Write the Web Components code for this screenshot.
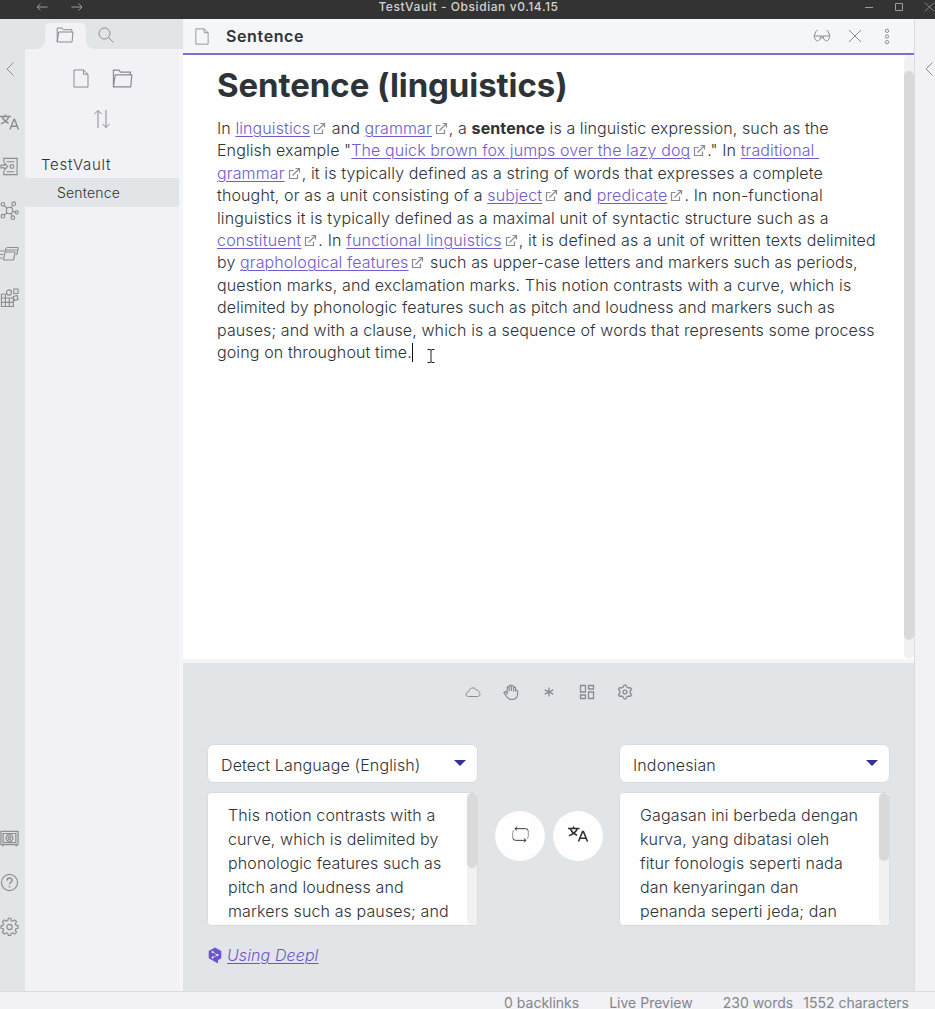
<!DOCTYPE html>
<html lang="en">
<head>
<meta charset="utf-8">
<title>TestVault - Obsidian v0.14.15</title>
<style>
html,body{margin:0;height:100%;overflow:hidden;background:#e1e5e8}
body{font-family:Inter,"Noto Sans",sans-serif;color:#2e3338;font-size:16px;font-weight:300}
</style>
</head>
<body>
<vault-app></vault-app>
<script>
const I={
arrowL:['0 0 12 10','<path d="M11.5 5H1M4.5 1.5 1 5l3.5 3.5"/>'],
arrowR:['0 0 12 10','<path d="M.5 5H11M7.5 1.5 11 5 7.5 8.5"/>'],
min:['0 0 10 10','<path d="M1 5.5h8"/>'],
max:['0 0 10 10','<path d="M1.5 1.5h7v7h-7z"/>'],
close:['0 0 14 14','<path d="M1 1l12 12M13 1 1 13"/>'],
chev:['0 0 8 14','<path d="M7.500 .5 1 7l6.500 6.500"/>'],
folder:['0 0 18 16','<path d="M1.200 15V1h4.800l1.200 1.700h8.600v2M1.200 15 2.800 5H17l-1 10z"/>'],
file:['0 0 16 20','<path d="M1 1h9.500L15 5.500V19H1zM10.500 1v4.500H15"/>'],
search:['0 0 16 16','<circle cx="6.500" cy="6.500" r="5.500"/><path d="M10.500 10.500l5 5"/>'],
sort:['0 0 18 20','<path d="M5 19V1.500M1.500 5 5 1.500 8.500 5M13 1v17.500M9.500 15l3.500 3.500 3.500-3.500"/>'],
trans:['0 0 20 18','<path d="M0 2.700h11.500M5.500.5v2.200M1 10.500C5 8.500 8.500 6 9.300 2.700M2.500 3.500C4 7 6 8.500 9 9.800M10.500 16.500 14.600 5.800h.8l4.100 10.700M12 13h6" />'],
doc:['0 0 20 20','<path d="M4 5.500V1.500h14v17H4V14.500M7 5h8M7 15.500h8M1 8.500h4V6.500L8 10l-3 3.500v-2H1z"/><circle cx="12.500" cy="10" r="2"/>'],
graph:['0 0 20 20','<circle cx="10" cy="10" r="3.400"/><circle cx="3" cy="3.500" r="1.900"/><circle cx="14.500" cy="2.800" r="1.900"/><circle cx="3" cy="16" r="1.900"/><circle cx="17.500" cy="12" r="1.600"/><circle cx="13.500" cy="17.500" r="1.900"/><path d="M4.500 5l3 2.500M13.500 4.600l-2 2.500M4.500 14.700 7.500 12.500M13.300 11l2.600.6M12.800 15.800 11.500 13"/>'],
cards:['0 0 20 16','<path d="M7.500 1.500h10.800q1 0 .8 1L17.500 9M6.500 4h11M5.500 6h9.500q1 0 .8 1l-1.300 6q-.2 1-1.200 1H4.500q-1 0-.8-1L5.800 3.500q.3-2 2-2M0 5h4M0 8.500h3.200M0 12h2.500"/>'],
plug:['0 0 20 20','<path d="M1.500 6v12.500H14V10M1.500 10H14M5.700 6v12.500M9.800 10v8.500M1.500 14.300H14M1.500 6h4.200M14.500 1h4.500v4.500h-4.500zM14 8.500l4-1 1 4-4 1z"/><circle cx="9.500" cy="4.500" r="2.600"/>'],
vault:['0 0 20 18','<path d="M1 1.500h18v14H1zM3.300 3.700h13.400v9.600H3.300zM3 16v1.500M17 16v1.500"/><circle cx="10" cy="8.500" r="3.600"/><circle cx="10" cy="8.500" r="1.500"/>'],
help:['0 0 20 20','<circle cx="10" cy="10" r="8.500"/><path d="M7.500 8c0-3.800 5.300-3.500 5.200-.3C12.600 9.800 10 9.800 10 12M10 13.800v1.400" stroke-width="1.500"/>'],
gear:['0 0 20 20','<path d="M8.300 3.600 8.600 1.300h2.800l.3 2.300 1.900.8 1.900-1.400 2 2-1.400 1.900.8 1.900 2.100.3v2.800l-2.100.3-.8 1.900 1.400 1.900-2 2-1.900-1.400-1.900.8-.3 1.900H8.600l-.3-1.900-1.900-.8L4.500 18l-2-2 1.400-1.900-.8-1.900L1.100 11.900V9.100l2-.3.8-1.900L2.500 5l2-2 1.900 1.400z" stroke-linejoin="round"/><circle cx="10" cy="10.500" r="2.800"/>'],
cog:['0 0 16 16','<path d="M6.300 3 7 1.100h2L9.700 3l1.700 1 2-.4 1.100 1.800L13.200 7v2l1.300 1.600-1.100 1.800-2-.4-1.700 1L9 14.900H7L6.300 13l-1.700-1-2 .4-1.100-1.800L2.800 9V7L1.500 5.400l1.100-1.800 2 .4z" stroke-linejoin="round"/><circle cx="8" cy="8" r="1.900"/>'],
glasses:['0 0 18 14','<path d="M.8 7h16.400M1 7 3 2.300q.4-1 1.500-.8M17 7l-2-4.700q-.4-1-1.500-.8M1.500 7.500c0 6 6 5.500 6.200 0M10.300 7.500c.2 5.500 6.200 6 6.200 0M7.700 9q1.300-1 2.600 0"/>'],
dots:['0 0 6 18','<circle cx="3" cy="3" r="1.700"/><circle cx="3" cy="9" r="1.700"/><circle cx="3" cy="15" r="1.700"/>'],
cloud:['0 0 16 12','<path d="M3.500 10.500C.2 10.500.2 6 3.600 5.800 4 2 9.300.2 11.200 4c2.300-.2 2.800 1.500 2.600 2.300 1.800 1 1.500 4.200-1.300 4.200z"/>'],
hand:['0 0 16 16','<path d="M4.200 10.200V3.500c0-1.300 2-1.300 2 0V7M6.200 7V2c0-1.300 2.200-1.300 2.200 0v5M8.400 7V2.500c0-1.300 2.200-1.300 2.200 0v5M10.600 7.500V4c0-1.300 2-1.300 2 0v3.500c0-1.800 2-1.600 2 0V10c0 6.500-8.200 7-11 2.500L1.200 9.200c-.7-1.300 1-2.200 1.800-1.100l1.200 1.700"/>'],
star:['0 0 12 12','<path d="M6 1.500v9M1.700 3.800l8.600 4.400M10.300 3.800 1.700 8.200"/>'],
dash:['0 0 16 16','<path d="M1.500 1.500h5v6.500h-5zM9.500 1.500h5v3.500h-5zM9.500 8h5v6.500h-5zM1.500 11h5v3.500h-5z"/>'],
ext:['0 0 13 13','<path d="M5.500 3.500h-4v8h8v-4M4.500 8.500l7-7M7.500 1.500h4v4"/>'],
swap:['0 0 20 18','<path d="M4 2.800h11q3 0 3 2.200M6.500.8 4.200 2.800l2.300 2M16 15.200H5q-3 0-3-2.200M13.500 13.200l2.300 2-2.300 2"/><path d="M1.800 13V7q0-2 1.700-2.500M18.200 5v6q0 2-1.500 2.500" opacity=".55"/>'],
deepl:['0 0 14 17','<path d="M7 .5 13.300 4v7.300L10 13.200V16.500L6.500 14.600.7 11.300V4z" fill="#6c56cc" stroke="none"/><path d="M4.500 5 9.500 8 4.500 10.500" stroke="#e1e5e8" stroke-width=".7"/><g fill="#fff" stroke="none"><circle cx="4.600" cy="5" r="1"/><circle cx="9.500" cy="8" r="1"/><circle cx="4.600" cy="10.500" r="1"/></g>'],
caret:['0 0 12 6','<path d="M.5 0h11v.5L6 6 .5.500z" fill="#33309a" stroke="none"/>'],
ibeam:['0 0 8 16','<path d="M.5 1.500H3L4 2.200 5 1.500h2.500M4 2.200v11.600M.5 14.500H3l1-.7 1 .7h2.500" stroke="#222"/>']
};
const define=(name,css,html)=>customElements.define(name,class extends HTMLElement{
 constructor(){super();this.attachShadow({mode:'open'}).innerHTML='<style>*{box-sizing:border-box}'+css+'</style>'+html;}
});
customElements.define('ob-icon',class extends HTMLElement{
 constructor(){super();this.attachShadow({mode:'open'});}
 connectedCallback(){
  const [vb,body]=I[this.getAttribute('name')];const d=vb.split(' ');
  const w=this.getAttribute('w')||d[2],h=this.getAttribute('h')||d[3];
  this.shadowRoot.innerHTML=`<style>:host{display:inline-flex;flex:none;width:${w}px;height:${h}px;color:#888b8f}svg{display:block}</style><svg width="${w}" height="${h}" viewBox="${vb}" preserveAspectRatio="none" fill="none" stroke="currentColor" stroke-width="${this.getAttribute('sw')||1}">${body}</svg>`;
 }
});
define('title-bar',`:host{display:grid;grid-template-columns:1fr auto 1fr;height:19px;background:#333;color:#d2d2d2;font-size:12px;font-weight:500;line-height:14px}
nav{display:flex;gap:23px;padding:2px 0 0 36px}.w{display:flex;justify-content:flex-end;gap:20px;padding-top:2px}
ob-icon{color:#a39b9b}span{letter-spacing:.57px;margin-left:2px}`,
`<nav><ob-icon name="arrowL"></ob-icon><ob-icon name="arrowR"></ob-icon></nav><span><slot></slot></span><div class="w"><ob-icon name="min"></ob-icon><ob-icon name="max"></ob-icon><ob-icon name="close" w="11" h="10"></ob-icon></div>`);
define('side-ribbon',`:host{display:flex;flex-direction:column;box-sizing:border-box;background:#e1e5e8;width:25px;height:972px;padding:43px 0 43px}
.r{display:flex;height:44px;align-items:center;justify-content:center;width:19px}.c{height:14px;margin-bottom:24px}.s{flex:1}ob-icon{color:#8b8d8f}`,
`<div class="r c"><ob-icon name="chev"></ob-icon></div><div class="r"><ob-icon name="trans" w="19" h="17" sw="1.5"></ob-icon></div><div class="r"><ob-icon name="doc" w="19" h="19" sw="1.200"></ob-icon></div><div class="r"><ob-icon name="graph" w="19" h="19" sw="1.200"></ob-icon></div><div class="r"><ob-icon name="cards" w="19" h="16" sw="1.200"></ob-icon></div><div class="r"><ob-icon name="plug" w="19" sw="1.200"></ob-icon></div><div class="s"></div><div class="r"><ob-icon name="vault" w="19" h="17" sw="1.300"></ob-icon></div><div class="r"><ob-icon name="help" w="19" h="19" sw="1.200"></ob-icon></div><div class="r"><ob-icon name="gear" w="19" h="19" sw="1.200"></ob-icon></div>`);
define('file-explorer',`:host{display:block;background:linear-gradient(90deg,#f1f1f6 154px,#f4f5f7 154px)}
.tabs{height:30px;background:#e1e5e8;display:flex;padding:4px 0 0 20px}
.tab{height:26px;width:41px;display:flex;align-items:center;justify-content:center;position:relative;padding:0 1px 2px 0}
.on{background:#f1f1f6;border-radius:5px 5px 0 0}.on:before,.on:after{content:"";position:absolute;bottom:0;width:8px;height:8px}
.on:before{right:100%;background:radial-gradient(circle at 0 0,#e1e5e8 7.5px,#f1f1f6 8px)}.on:after{left:100%;background:radial-gradient(circle at 100% 0,#e1e5e8 7.5px,#f1f1f6 8px)}
.acts{display:flex;justify-content:center;gap:23px;width:154px;padding:20px 0 0 1px}.sort{display:flex;justify-content:center;width:154px;padding-top:21px}
.root{font-size:15px;line-height:20px;margin:26px 0 0 16px;letter-spacing:.7px}.item{background:#e1e5e8;border-radius:3px;margin-top:3px;height:29px;width:154px;padding-left:32px;font-size:14px;line-height:29px;letter-spacing:.2px}`,
`<div class="tabs"><div class="tab on"><ob-icon name="folder" w="18" h="16"></ob-icon></div><div class="tab"><ob-icon name="search"></ob-icon></div></div><div class="acts"><ob-icon name="file" w="16" h="19"></ob-icon><ob-icon name="folder" w="21" h="19"></ob-icon></div><div class="sort"><ob-icon name="sort" h="20"></ob-icon></div><div class="root"><slot name="root"></slot></div><div class="item"><slot></slot></div>`);
define('pane-header',`:host{display:flex;box-sizing:border-box;align-items:center;height:36px;background:#f5f6f8;border-bottom:2px solid #7b6cd9;padding:0 24px 0 12px}
b{font-size:16px;font-weight:600;margin-left:17px;letter-spacing:.62px;flex:1}.a{display:flex;align-items:center;gap:17px}.x{margin-right:5px}`,
`<ob-icon name="file" w="14" h="17"></ob-icon><b><slot></slot></b><div class="a"><ob-icon name="glasses" w="18"></ob-icon><ob-icon name="close" w="14" h="14" class="x"></ob-icon><ob-icon name="dots" w="6" h="17"></ob-icon></div>`);
define('scroll-bar',`:host{display:flow-root;width:10px;background:#f1f1f1;border-radius:5px}i{display:block;background:#d9d9d9;border-radius:5px;margin-top:var(--top,0);height:var(--len)}`,`<i></i>`);
define('ext-link',`:host{display:inline}a{color:#705dcf;text-decoration:underline;text-underline-offset:2px;text-decoration-thickness:1px;white-space:pre}ob-icon{margin:0 1px 0 3px;vertical-align:-1px}:host([bare]) ob-icon{display:none}`,`<a><slot></slot></a><ob-icon name="ext" sw="1.200"></ob-icon>`);
define('text-line',`:host{display:block;white-space:pre;letter-spacing:var(--ls,.12px)}`,`<slot></slot>`);
define('note-editor',`:host{display:flex;height:604px;background:#fefefe;position:relative}
article{flex:1;padding:0 0 0 34px}h1{font-size:33px;line-height:44px;font-weight:700;margin:8px 0 10px;letter-spacing:-.08px}.p{line-height:22.4px}
b{font-weight:700}.caret{display:inline-block;width:1px;height:19px;background:#111;vertical-align:-4px}.mouse{position:absolute;left:244px;top:293px}scroll-bar{--top:16px;--len:569px}`,
`<article><h1>Sentence (linguistics)</h1><div class="p">
<text-line style="--ls:.1px">In <ext-link>linguistics</ext-link> and <ext-link>grammar</ext-link>, a <b>sentence</b> is a linguistic expression, such as the</text-line>
<text-line style="--ls:.1px">English example "<ext-link>The quick brown fox jumps over the lazy dog</ext-link>." In <ext-link bare>traditional </ext-link></text-line>
<text-line style="--ls:.14px"><ext-link>grammar</ext-link>, it is typically defined as a string of words that expresses a complete</text-line>
<text-line style="--ls:.13px">thought, or as a unit consisting of a <ext-link>subject</ext-link> and <ext-link>predicate</ext-link>. In non-functional</text-line>
<text-line style="--ls:.14px">linguistics it is typically defined as a maximal unit of syntactic structure such as a</text-line>
<text-line style="--ls:.18px"><ext-link>constituent</ext-link>. In <ext-link>functional linguistics</ext-link>, it is defined as a unit of written texts delimited</text-line>
<text-line style="--ls:.11px">by <ext-link>graphological features</ext-link> such as upper-case letters and markers such as periods,</text-line>
<text-line style="--ls:.13px">question marks, and exclamation marks. This notion contrasts with a curve, which is</text-line>
<text-line style="--ls:.11px">delimited by phonologic features such as pitch and loudness and markers such as</text-line>
<text-line style="--ls:.11px">pauses; and with a clause, which is a sequence of words that represents some process</text-line>
<text-line>going on throughout time.<span class="caret"></span></text-line></div></article><ob-icon class="mouse" name="ibeam"></ob-icon><scroll-bar></scroll-bar>`);
define('lang-select',`:host{display:flex;box-sizing:border-box;align-items:center;justify-content:space-between;height:39px;background:#fefefe;border:1px solid #dadde0;border-radius:7px;padding:3px 11px 0 13px;line-height:24px;letter-spacing:.13px}ob-icon{margin-top:-4px}`,`<span><slot></slot></span><ob-icon name="caret" w="12" h="6"></ob-icon>`);
define('text-box',`:host{display:flex;box-sizing:border-box;height:134px;background:#fefefe;border:1px solid #dadde0;border-radius:4px;overflow:hidden;line-height:24px}div{flex:1;padding:10px 0 0 20px}`,`<div><slot></slot></div><scroll-bar></scroll-bar>`);
define('translate-panel',`:host{display:block;box-sizing:border-box;height:332px;background:#e1e5e8;border-top:4px solid #f5f6f8}
.tools{display:flex;justify-content:center;gap:22px;height:58px;align-items:center}.tools>span{width:16px;display:flex;justify-content:center}
.g{display:grid;grid-template-columns:271px 108px 271px;column-gap:16.5px;padding:23px 0 0 24px}.col{display:grid;gap:9px}.btns{display:flex;gap:8px;padding:67px 0 0 .5px}
.round{width:50px;height:50px;flex:none;border-radius:50%;background:#fefefe;display:flex;align-items:center;justify-content:center;padding-bottom:3px}.round ob-icon{color:#2e3338}
.f{display:flex;align-items:center;gap:5px;padding:17px 0 0 25px;line-height:24px;font-style:italic;letter-spacing:.1px}a{color:#6c56cc;text-decoration:underline;text-underline-offset:2px;text-decoration-thickness:1px}`,
`<div class="tools"><span><ob-icon name="cloud" w="16" h="12"></ob-icon></span><span><ob-icon name="hand" sw="1.200"></ob-icon></span><span><ob-icon name="star" sw="1.300"></ob-icon></span><span><ob-icon name="dash" sw="1.300"></ob-icon></span><span><ob-icon name="cog" sw="1.300"></ob-icon></span></div>
<div class="g"><div class="col"><lang-select>Detect Language (English)</lang-select><text-box style="--len:75px"><text-line>This notion contrasts with a</text-line><text-line>curve, which is delimited by</text-line><text-line>phonologic features such as</text-line><text-line>pitch and loudness and</text-line><text-line>markers such as pauses; and</text-line></text-box></div>
<div class="btns"><div class="round"><ob-icon name="swap" w="19" h="17"></ob-icon></div><div class="round"><ob-icon name="trans" w="20" h="17" sw="1.600"></ob-icon></div></div>
<div class="col" style="--ls:.15px"><lang-select>Indonesian</lang-select><text-box style="--len:68px"><text-line>Gagasan ini berbeda dengan</text-line><text-line>kurva, yang dibatasi oleh</text-line><text-line>fitur fonologis seperti nada</text-line><text-line>dan kenyaringan dan</text-line><text-line>penanda seperti jeda; dan</text-line></text-box></div></div>
<div class="f"><ob-icon name="deepl"></ob-icon><a>Using Deepl</a></div>`);
define('status-bar',`:host{display:flex;box-sizing:border-box;justify-content:flex-end;height:18px;border-top:1px solid #dadde0;background:#f1f1f6;color:#84868a;font-size:14px;line-height:22px;padding-right:26px;font-weight:400;white-space:pre}
.a{margin-right:30px}.c{margin-right:10px}`,`<span class="a">0 backlinks</span><span class="a">Live Preview</span><span class="c">230 words</span><span>1552 characters</span>`);
define('vault-app',`:host{display:block;width:935px;height:1009px;overflow:hidden}.w{display:grid;grid-template-columns:25px 158px 731px 21px;height:972px}.r{background:#f1f1f6;border-left:1px solid #dadde0;padding:43px 0 0 10px;line-height:0}`,
`<title-bar>TestVault - Obsidian v0.14.15</title-bar><div class="w"><side-ribbon></side-ribbon><file-explorer><span slot="root">TestVault</span>Sentence</file-explorer><main><pane-header>Sentence</pane-header><note-editor></note-editor><translate-panel></translate-panel></main><aside class="r"><ob-icon name="chev"></ob-icon></aside></div><status-bar></status-bar>`);
</script>
</body>
</html>
